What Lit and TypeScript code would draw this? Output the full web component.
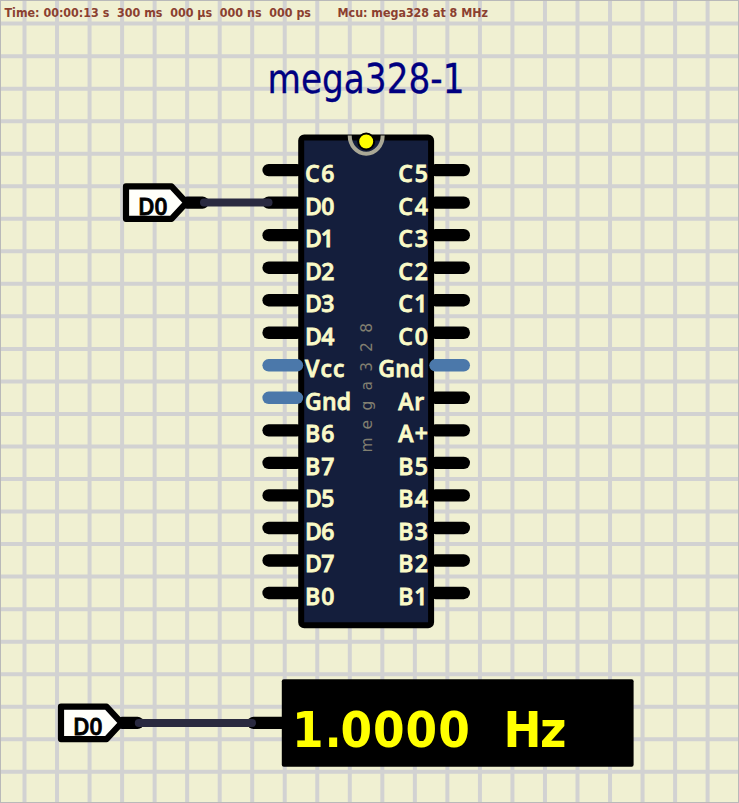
import { LitElement, css, html, svg } from "lit";
import { customElement } from "lit/decorators.js";

const PITCH = 32.53;
const LEFT = ["C6", "D0", "D1", "D2", "D3", "D4", "Vcc", "Gnd", "B6", "B7", "D5", "D6", "D7", "B0"];
const RIGHT = ["C5", "C4", "C3", "C2", "C1", "C0", "Gnd", "Ar", "A+", "B5", "B4", "B3", "B2", "B1"];
const POWER = new Set(["Vcc", "Gnd"]);
const WIDTHS: Record<string, number> = { Vcc: 39.5, Gnd: 46, D1: 29, C1: 29, B1: 29, Ar: 26 };

@customElement("app-root")
export class AppRoot extends LitElement {
  static styles = css`
    :host { display: block; width: 739px; height: 803px; }
    .canvas { display: block; background: #f0f0d2; }
    .grid { stroke: #d2d2d2; stroke-width: 4; }
    .frame { fill: none; stroke: #b9b9b9; stroke-width: 1; }
    text { white-space: pre; }
    .status { font: bold 12.6px "DejaVu Sans Condensed", "DejaVu Sans", sans-serif; font-stretch: condensed; fill: #8b4030; }
    .title { font: 41px "DejaVu Sans Condensed", "DejaVu Sans", sans-serif; font-stretch: condensed; fill: #000080; stroke: #000080; stroke-width: 0.3; }
    .pin { stroke: #000; stroke-width: 12.4; stroke-linecap: round; }
    .power { stroke: #4b78aa; }
    .body { fill: #141e3c; stroke: #000; stroke-width: 6; }
    .label { font: 600 23px "Open Sans", "Noto Sans", sans-serif; fill: #fafac8; stroke: #fafac8; stroke-width: 0.8; }
    .part { font: 15.5px "DejaVu Sans", sans-serif; fill: #817f70; text-anchor: middle; }
    .arc { fill: none; stroke: #aaa896; stroke-width: 4; }
    .dot { fill: #ff0; stroke: #000; stroke-width: 2; }
    .wire { stroke: #2a2a40; stroke-width: 8; stroke-linecap: round; }
    .tag { fill: #fffffa; stroke: #000; stroke-width: 6.2; stroke-linejoin: round; }
    .net { font: 600 23px "Open Sans", "Noto Sans", sans-serif; fill: #000; stroke: #000; stroke-width: 0.8; }
    .display { fill: #000; }
    .reading { font: bold 50.5px "DejaVu Sans Condensed", "DejaVu Sans", sans-serif; font-stretch: condensed; fill: #ff0; }
  `;

  private grid() {
    const cols = Array.from({ length: 22 }, (_, i) => 24.5 + i * PITCH);
    const rows = Array.from({ length: 24 }, (_, i) => 23.6 + i * PITCH);
    return svg`<g class="grid">
      ${cols.map((x) => svg`<line x1=${x} x2=${x} y1="0" y2="803"></line>`)}
      ${rows.map((y) => svg`<line x1="0" x2="739" y1=${y} y2=${y}></line>`)}
    </g>`;
  }

  private pins(names: string[], right: boolean) {
    return names.map((name, i) => {
      const y = 170.1 + i * PITCH;
      const [a, b] = right ? [435.5, 463.8] : [268.6, 297];
      return svg`<line class="pin ${POWER.has(name) ? "power" : ""}" x1=${a} x2=${b} y1=${y} y2=${y}></line>`;
    });
  }

  private labels(names: string[], right: boolean) {
    return names.map((name, i) => {
      const w = WIDTHS[name] ?? 29.5;
      const x = right ? (name === "Gnd" ? 378.3 : 398.3) : 305;
      return svg`<text class="label" x=${x} y=${182 + i * PITCH} textLength=${w}>${name}</text>`;
    });
  }

  private tag(x: number, y: number) {
    return svg`<g transform="translate(${x} ${y})">
      <line class="pin" x1="64" x2="79.5" y1="0" y2="0"></line>
      <path class="tag" d="M3 -16.2H48.5L63.5 0L48.5 16.2H3Z"></path>
      <text class="net" x="15" y="12" textLength="29.5" lengthAdjust="spacingAndGlyphs">D0</text>
    </g>`;
  }

  render() {
    return html`<svg class="canvas" width="739" height="803" viewBox="0 0 739 803">
      ${this.grid()}
      <rect class="frame" x="0.5" y="0.5" width="738" height="802"></rect>
      <text class="status" x="4.5" y="17" textLength="306.5" lengthAdjust="spacingAndGlyphs">Time: 00:00:13 s  300 ms  000 µs  000 ns  000 ps</text>
      <text class="status" x="337.5" y="17" textLength="150.5" lengthAdjust="spacingAndGlyphs">Mcu: mega328 at 8 MHz</text>
      <text class="title" x="267.5" y="92.7" textLength="197" lengthAdjust="spacingAndGlyphs">mega328-1</text>
      <rect class="body" x="301.2" y="137.6" width="129.9" height="487.6" rx="3"></rect>
      ${this.pins(LEFT, false)} ${this.pins(RIGHT, true)}
      <path class="arc" d="M349.7 135.5A16.5 18.2 0 0 0 382.7 135.5"></path>
      <circle class="dot" cx="366.2" cy="141.5" r="8"></circle>
      ${this.labels(LEFT, false)} ${this.labels(RIGHT, true)}
      <text class="part" transform="translate(371.8 450) rotate(-90)" x="5 25.3 44.5 64.3 83.3 103 122.3">mega328</text>
      ${this.tag(123, 202.6)} ${this.tag(58, 722.9)}
      <line class="pin" x1="253.5" x2="284" y1="722.9" y2="722.9"></line>
      <line class="wire" x1="204" x2="268.5" y1="202.6" y2="202.6"></line>
      <line class="wire" x1="138.8" x2="252" y1="722.9" y2="722.9"></line>
      <rect class="display" x="281.8" y="679.3" width="351.8" height="87.4" rx="2"></rect>
      <text class="reading" x="292 324.5 340.5 373 405.6 438.2 503.5 540" y="747">1.0000Hz</text>
    </svg>`;
  }
}
